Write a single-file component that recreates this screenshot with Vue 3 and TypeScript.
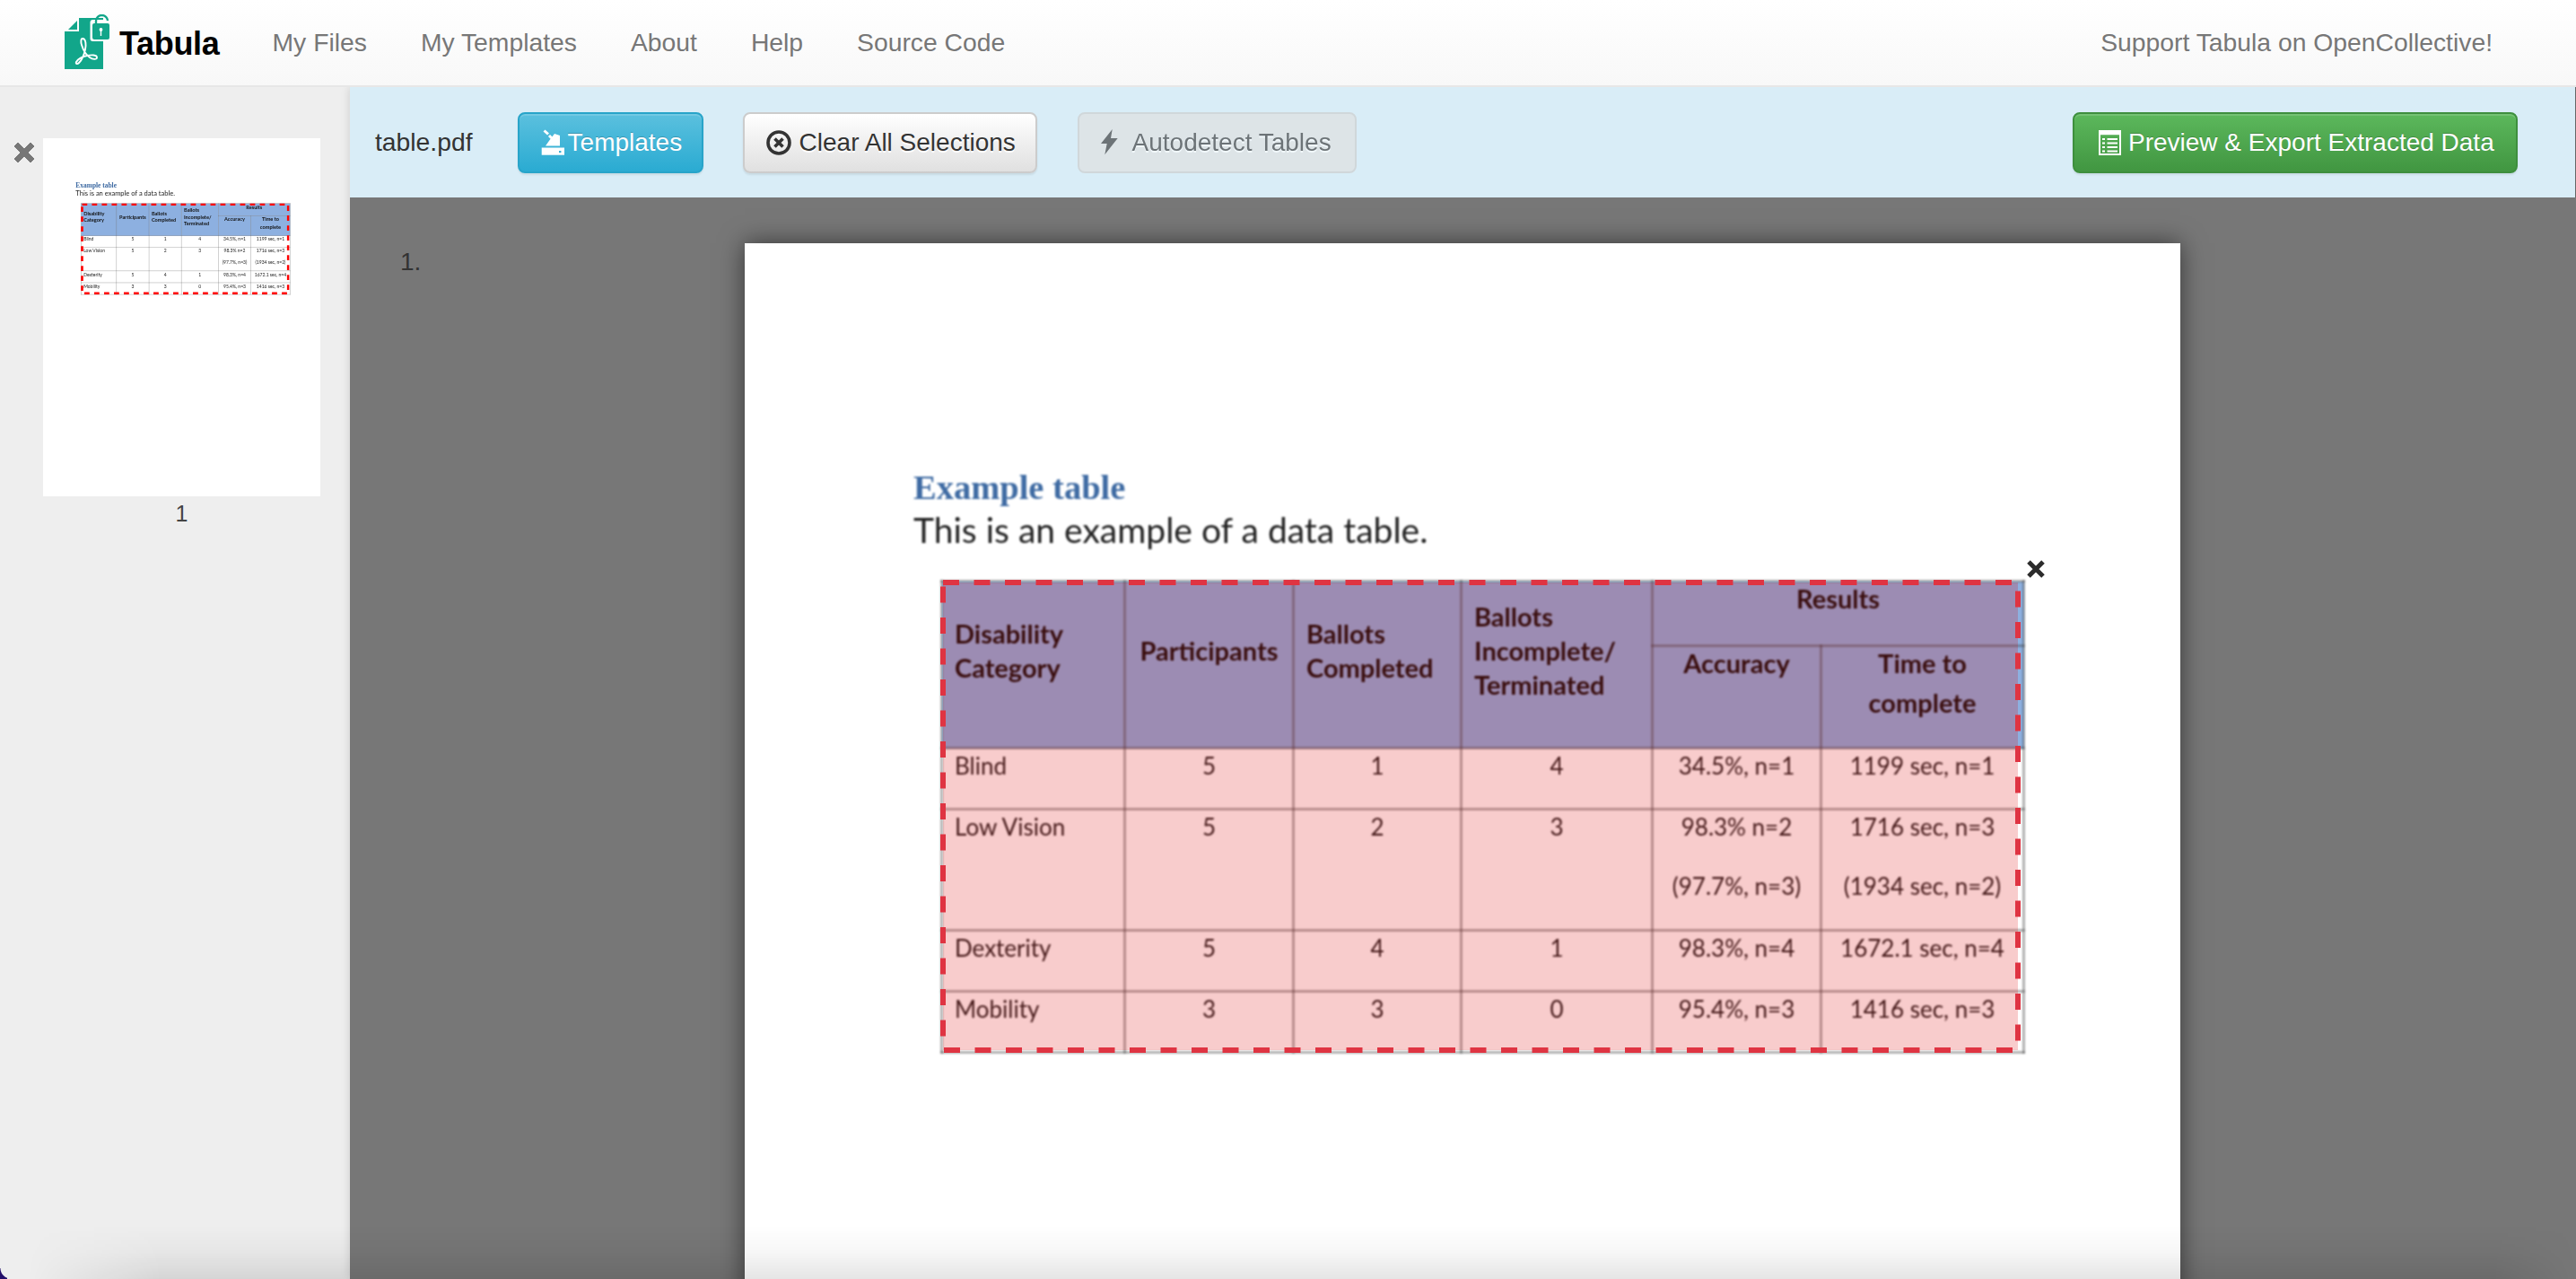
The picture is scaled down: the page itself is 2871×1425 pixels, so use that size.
<template>
  <div class="app">
    <!-- 顶部导航 -->
    <header class="navbar">
      <a class="brand">
        <svg class="logo" viewBox="0 0 50 61" width="50" height="61">
          <path d="M4 17 14 7V17Z" fill="#12a68a" />
          <path d="M0 19H16V4H43V61H0Z" fill="#12a68a" />
          <path d="M20 27c-2 0-2 4-1 7 2 7 5 11 9 14 3 2 8 3 8 0 0-3-6-3-11-2-5 1-10 4-12 7-1 2 1 3 3 1 3-3 6-10 7-15 1-4 1-12-3-12Z" fill="none" stroke="#fff" stroke-width="1.9" />
          <rect x="28.5" y="6" width="21.5" height="24" rx="3" fill="#fff" />
          <rect x="31" y="10" width="19" height="18" rx="2" fill="#12a68a" />
          <path d="M35 10V7a6.5 6 0 0 1 13 0" fill="none" stroke="#12a68a" stroke-width="2.4" />
          <circle cx="40.5" cy="17" r="1.9" fill="#fff" />
          <rect x="39.8" y="17" width="1.4" height="7" fill="#fff" />
        </svg>
        <span class="brand-name">Tabula</span>
      </a>
      <nav class="nav-links">
        <a v-for="link in navLinks" :key="link">{{ link }}</a>
      </nav>
      <a class="support">Support Tabula on OpenCollective!</a>
    </header>

    <div class="workspace">
      <!-- 缩略图侧栏 -->
      <aside class="sidebar">
        <svg class="thumb-close" viewBox="0 0 24 24" width="24" height="24">
          <path d="M5 1 12 8 19 1 23 5 16 12 23 19 19 23 12 16 5 23 1 19 8 12 1 5Z" fill="#777" stroke="#777" stroke-linejoin="round" />
        </svg>
        <div class="thumb-col">
          <div class="thumb">
            <div class="sheet sheet-thumb">
              <h4 class="doc-title">Example table</h4>
              <p class="doc-sub">This is an example of a data table.</p>
              <div class="doc-table-wrap">
                <table class="doc-table">
                  <colgroup>
                    <col v-for="w in colWidths" :key="w.id" :style="{ width: w.px + 'px' }" />
                  </colgroup>
                  <thead>
                    <tr class="head-top">
                      <th rowspan="2" class="left">Disability<br />Category</th>
                      <th rowspan="2">Participants</th>
                      <th rowspan="2" class="left">Ballots<br />Completed</th>
                      <th rowspan="2" class="left">Ballots<br />Incomplete/<br />Terminated</th>
                      <th colspan="2" class="results">Results</th>
                    </tr>
                    <tr class="head-sub">
                      <th><div class="nudge">Accuracy</div></th>
                      <th><div class="nudge">Time to<br />complete</div></th>
                    </tr>
                  </thead>
                  <tbody>
                    <tr v-for="row in rows" :key="row.name">
                      <td class="left">{{ row.name }}</td>
                      <td>{{ row.participants }}</td>
                      <td>{{ row.completed }}</td>
                      <td>{{ row.incomplete }}</td>
                      <td><p v-for="line in row.accuracy" :key="line">{{ line }}</p></td>
                      <td><p v-for="line in row.time" :key="line">{{ line }}</p></td>
                    </tr>
                  </tbody>
                </table>
                <svg class="selection" viewBox="0 0 1204 527" width="1204" height="527">
                  <rect x="7" y="7" width="1190" height="513" fill="none" stroke="#f00" stroke-width="14" stroke-dasharray="30 27" />
                </svg>
              </div>
            </div>
          </div>
          <div class="thumb-label">1</div>
        </div>
      </aside>

      <main class="content">
        <!-- 工具条 -->
        <div class="toolbar">
          <span class="file-name">table.pdf</span>
          <button class="btn btn-info">
            <svg viewBox="0 0 26 29" width="26" height="29">
              <path d="M5 18.5 10 11.5 15 5 21 7V18.5Z" fill="#fff" />
              <path d="M3.5 1.5 8 5.5" stroke="#fff" stroke-width="3" />
              <path d="M9 7l3 3" stroke="#fff" stroke-width="3" />
              <path d="M.7 20.5H26V28.7H.7Z" fill="#fff" />
              <rect x="20" y="24" width="2.4" height="2.2" fill="#3bb1d6" />
            </svg>
            <span>Templates</span>
          </button>
          <button class="btn btn-default btn-clear">
            <svg viewBox="0 0 28 28" width="28" height="28">
              <circle cx="14" cy="14" r="12" fill="none" stroke="#333" stroke-width="3.6" />
              <path d="M9.5 9.5 18.5 18.5M18.5 9.5 9.5 18.5" stroke="#333" stroke-width="3.6" />
            </svg>
            <span>Clear All Selections</span>
          </button>
          <button class="btn btn-default btn-disabled">
            <svg viewBox="0 0 19 29" width="19" height="29">
              <path d="M12.7 0 0 16H6.7L4.3 28.3 18.7 10H11Z" fill="#333" />
            </svg>
            <span>Autodetect Tables</span>
          </button>
          <button class="btn btn-success">
            <svg viewBox="0 0 25 28" width="25" height="28">
              <path d="M1 1H24V27H1Z" fill="none" stroke="#fff" stroke-width="2" />
              <path d="M1 3.5H24" stroke="#fff" stroke-width="3.5" />
              <path d="M4 10h3M9.5 10H21M4 14.5h3M9.5 14.5H21M4 19h3M9.5 19H21M4 23.5h3M9.5 23.5H21" stroke="#fff" stroke-width="2" />
            </svg>
            <span>Preview &amp; Export Extracted Data</span>
          </button>
        </div>

        <!-- PDF 页面 -->
        <section class="pages">
          <div class="page-num">1.</div>
          <div class="sheet">
            <h4 class="doc-title blurred">Example table</h4>
            <p class="doc-sub blurred">This is an example of a data table.</p>
            <div class="doc-table-wrap">
              <table class="doc-table blurred">
                <colgroup>
                  <col v-for="w in colWidths" :key="w.id" :style="{ width: w.px + 'px' }" />
                </colgroup>
                <thead>
                  <tr class="head-top">
                    <th rowspan="2" class="left">Disability<br />Category</th>
                    <th rowspan="2">Participants</th>
                    <th rowspan="2" class="left">Ballots<br />Completed</th>
                    <th rowspan="2" class="left">Ballots<br />Incomplete/<br />Terminated</th>
                    <th colspan="2" class="results">Results</th>
                  </tr>
                  <tr class="head-sub">
                    <th><div class="nudge">Accuracy</div></th>
                    <th><div class="nudge">Time to<br />complete</div></th>
                  </tr>
                </thead>
                <tbody>
                  <tr v-for="row in rows" :key="row.name">
                    <td class="left">{{ row.name }}</td>
                    <td>{{ row.participants }}</td>
                    <td>{{ row.completed }}</td>
                    <td>{{ row.incomplete }}</td>
                    <td><p v-for="line in row.accuracy" :key="line">{{ line }}</p></td>
                    <td><p v-for="line in row.time" :key="line">{{ line }}</p></td>
                  </tr>
                </tbody>
              </table>
              <!-- 选区 -->
              <svg class="selection" viewBox="0 0 1204 527" width="1204" height="527">
                <rect x="3" y="3" width="1198" height="521" fill="rgba(220,0,0,.2)" stroke="#df3442" stroke-width="6" stroke-dasharray="18 16.5" />
              </svg>
              <svg class="selection-close" viewBox="0 0 20 20" width="20" height="20">
                <path d="M2 2 18 18M18 2 2 18" stroke="#2c2c2c" stroke-width="5" />
              </svg>
            </div>
          </div>
        </section>
      </main>
    </div>

    <div class="window-fade"></div>
    <div class="window-corner"></div>
  </div>
</template>

<script setup lang="ts">
interface ResultRow {
  name: string
  participants: string
  completed: string
  incomplete: string
  accuracy: string[]
  time: string[]
}

const navLinks: string[] = ['My Files', 'My Templates', 'About', 'Help', 'Source Code']

// 表格列宽
const colWidths = [
  { id: 'category', px: 204 },
  { id: 'participants', px: 188 },
  { id: 'completed', px: 187 },
  { id: 'incomplete', px: 213 },
  { id: 'accuracy', px: 188 },
  { id: 'time', px: 226 },
]

const rows: ResultRow[] = [
  { name: 'Blind', participants: '5', completed: '1', incomplete: '4', accuracy: ['34.5%, n=1'], time: ['1199 sec, n=1'] },
  {
    name: 'Low Vision',
    participants: '5',
    completed: '2',
    incomplete: '3',
    accuracy: ['98.3% n=2', '(97.7%, n=3)'],
    time: ['1716 sec, n=3', '(1934 sec, n=2)'],
  },
  { name: 'Dexterity', participants: '5', completed: '4', incomplete: '1', accuracy: ['98.3%, n=4'], time: ['1672.1 sec, n=4'] },
  { name: 'Mobility', participants: '3', completed: '3', incomplete: '0', accuracy: ['95.4%, n=3'], time: ['1416 sec, n=3'] },
]
</script>

<style scoped>
.app {
  position: relative;
  display: flex;
  flex-direction: column;
  height: 1425px;
  overflow: hidden;
  font-family: 'Liberation Sans', Arial, sans-serif;
  font-size: 28px;
  color: #333;
}

.navbar {
  position: relative;
  z-index: 2;
  display: flex;
  align-items: center;
  flex: none;
  box-sizing: border-box;
  height: 97px;
  padding: 0 93px 0 72px;
  font-size: 28.3px;
  background: linear-gradient(to bottom, #fff 0%, #f8f8f8 100%);
  border-bottom: 2px solid #e7e7e7;
}

.brand {
  display: flex;
  align-items: flex-start;
  gap: 11px;
  margin-top: -2px;
}

.logo {
  display: block;
}

.brand-name {
  margin-top: 13px;
  font-size: 36px;
  line-height: 40px;
  font-weight: 700;
  letter-spacing: -0.3px;
  color: #000;
}

.nav-links {
  display: flex;
  gap: 60px;
  margin-left: 59px;
  color: #777;
}

.support {
  margin-left: auto;
  color: #777;
}

.workspace {
  display: flex;
  flex: 1;
  min-height: 0;
}

.sidebar {
  display: flex;
  align-items: flex-start;
  gap: 9px;
  flex: none;
  box-sizing: border-box;
  width: 390px;
  padding: 57px 0 0 15px;
  background: #eee;
}

.thumb-close {
  flex: none;
  margin-top: 4px;
}

.thumb-col {
  width: 309px;
  text-align: center;
}

.thumb {
  width: 309px;
  height: 399px;
  overflow: hidden;
  background: #fff;
  text-align: left;
}

.thumb-label {
  font-size: 25px;
  line-height: 38px;
  color: #444;
}

.sheet-thumb {
  transform: scale(0.1931);
  transform-origin: 0 0;
}

.content {
  display: flex;
  flex-direction: column;
  flex: 1;
  min-width: 0;
  box-shadow: 0 0 10px rgba(0, 0, 0, 0.14);
  z-index: 1;
}

.toolbar {
  display: flex;
  align-items: center;
  flex: none;
  box-sizing: border-box;
  height: 123px;
  padding: 0 64px 0 28px;
  background: #d9edf7;
  border-right: 1px solid #666;
}

.file-name {
  margin-right: 50px;
  font-size: 28.3px;
}

.btn {
  display: flex;
  align-items: center;
  flex: none;
  box-sizing: border-box;
  height: 68px;
  padding: 0 0 0 24px;
  border: 2px solid transparent;
  border-radius: 8px;
  font: inherit;
  white-space: nowrap;
  box-shadow:
    inset 0 2px 0 rgba(255, 255, 255, 0.15),
    0 2px 2px rgba(0, 0, 0, 0.075);
}

.btn-info {
  width: 207px;
  gap: 4px;
  color: #fff;
  background: linear-gradient(to bottom, #5bc0de 0%, #2aabd2 100%);
  border-color: #28a4c9;
  text-shadow: 0 -1px 0 rgba(0, 0, 0, 0.2);
}

.btn-default {
  color: #333;
  background: linear-gradient(to bottom, #fff 0%, #e0e0e0 100%);
  border-color: #ccc;
  text-shadow: 0 2px 0 #fff;
}

.btn-clear {
  width: 328px;
  gap: 9px;
  margin-left: 44px;
}

.btn-disabled {
  width: 311px;
  gap: 16px;
  margin-left: 45px;
  background: #e0e0e0;
  opacity: 0.65;
  box-shadow: none;
}

.btn-success {
  width: 496px;
  gap: 8px;
  margin-left: auto;
  padding-left: 27px;
  color: #fff;
  background: linear-gradient(to bottom, #5cb85c 0%, #419641 100%);
  border-color: #3e8f3e;
  text-shadow: 0 -1px 0 rgba(0, 0, 0, 0.2);
}

.pages {
  display: grid;
  grid-template-columns: 440px 1600px 1fr;
  flex: 1;
  min-height: 0;
  padding-top: 51px;
  overflow: hidden;
  background: #777;
}

.page-num {
  padding: 5px 0 0 56px;
  line-height: 32px;
}

.sheet {
  box-sizing: border-box;
  width: 1600px;
  height: 2070px;
  padding: 249px 0 0 188px;
  background: #fff;
  box-shadow: 0 0 26px rgba(0, 0, 0, 0.55);
}

.sheet-thumb {
  box-shadow: none;
}

.doc-title {
  margin: 0;
  font-family: 'Liberation Serif', 'Times New Roman', serif;
  font-size: 38.5px;
  line-height: 47px;
  font-weight: 700;
  color: #3f6ba3;
}

.doc-sub {
  margin: 0;
  font-family: Lato, 'Liberation Sans', sans-serif;
  font-size: 39px;
  line-height: 46px;
  color: #222;
}

.blurred {
  filter: blur(1px);
}

.doc-table-wrap {
  position: relative;
  width: 1206px;
  margin: 33px 0 0 30px;
}

.doc-table {
  width: 1206px;
  table-layout: fixed;
  border-collapse: collapse;
  font-family: Lato, 'Liberation Sans', sans-serif;
  font-size: 26px;
  color: #222;
}

.doc-table th,
.doc-table td {
  padding: 0;
  border: 3px solid rgba(60, 60, 60, 0.4);
  text-align: center;
  vertical-align: top;
  line-height: 36px;
}

.doc-table th {
  font-size: 29px;
  font-weight: 700;
  color: #111;
  background: #8db0e0;
}

.doc-table th[rowspan] {
  line-height: 38px;
}

.doc-table .left {
  padding-left: 13px;
  text-align: left;
}

.head-top {
  height: 72px;
}

.head-top th[rowspan] {
  padding-bottom: 31px;
  vertical-align: middle;
}

.head-sub {
  height: 114px;
}

.head-sub th {
  line-height: 44px;
}

.nudge {
  margin-top: -4px;
}

.doc-table td p {
  margin: 0 0 30px;
}

.doc-table td p:last-child {
  margin-bottom: 0;
}

.doc-table tbody tr {
  height: 68px;
}

.doc-table tbody tr:nth-child(2) {
  height: 135px;
}

.selection {
  position: absolute;
  top: 0;
  left: 0;
}

.selection-close {
  position: absolute;
  top: -22px;
  right: -25px;
}

.window-fade {
  position: absolute;
  left: 0;
  right: 0;
  bottom: 0;
  z-index: 3;
  height: 60px;
  background: linear-gradient(to bottom, transparent 0%, rgba(0, 0, 0, 0.03) 50%, rgba(0, 0, 0, 0.1) 100%);
  -webkit-mask-image: linear-gradient(to right, transparent 30px, #000 180px, #000 2780px, transparent 2871px);
  mask-image: linear-gradient(to right, transparent 30px, #000 180px, #000 2780px, transparent 2871px);
  pointer-events: none;
}

.window-corner {
  position: absolute;
  left: 0;
  bottom: 0;
  z-index: 4;
  width: 8px;
  height: 12px;
  background: radial-gradient(circle at 12px 0, transparent 11px, #24106a 12px);
}
</style>

<style>
html,
body {
  margin: 0;
  overflow: hidden;
}
</style>
